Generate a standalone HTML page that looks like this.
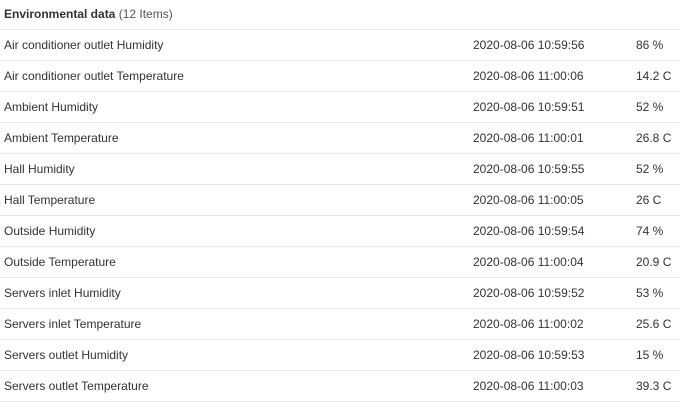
<!DOCTYPE html><html><head><style>
body{margin:0;background:#fff;font-family:"Liberation Sans",Arial,sans-serif;font-size:12px;color:#333;width:680px;height:404px;overflow:hidden}
.h{height:29px;line-height:28px;padding-left:4px;border-bottom:1px solid #e8e8e8}
.h b{font-weight:bold}.h span{color:#555}
.r{height:30px;line-height:30px;border-bottom:1px solid #e8e8e8;position:relative}
.r div{position:absolute;top:0}
.a{left:4px}.b{left:473px}.c{left:636px}
</style></head><body>
<div class="h"><b>Environmental data</b> <span>(12 Items)</span></div>
<div class="r"><div class="a">Air conditioner outlet Humidity</div><div class="b">2020-08-06 10:59:56</div><div class="c">86 %</div></div>
<div class="r"><div class="a">Air conditioner outlet Temperature</div><div class="b">2020-08-06 11:00:06</div><div class="c">14.2 C</div></div>
<div class="r"><div class="a">Ambient Humidity</div><div class="b">2020-08-06 10:59:51</div><div class="c">52 %</div></div>
<div class="r"><div class="a">Ambient Temperature</div><div class="b">2020-08-06 11:00:01</div><div class="c">26.8 C</div></div>
<div class="r"><div class="a">Hall Humidity</div><div class="b">2020-08-06 10:59:55</div><div class="c">52 %</div></div>
<div class="r"><div class="a">Hall Temperature</div><div class="b">2020-08-06 11:00:05</div><div class="c">26 C</div></div>
<div class="r"><div class="a">Outside Humidity</div><div class="b">2020-08-06 10:59:54</div><div class="c">74 %</div></div>
<div class="r"><div class="a">Outside Temperature</div><div class="b">2020-08-06 11:00:04</div><div class="c">20.9 C</div></div>
<div class="r"><div class="a">Servers inlet Humidity</div><div class="b">2020-08-06 10:59:52</div><div class="c">53 %</div></div>
<div class="r"><div class="a">Servers inlet Temperature</div><div class="b">2020-08-06 11:00:02</div><div class="c">25.6 C</div></div>
<div class="r"><div class="a">Servers outlet Humidity</div><div class="b">2020-08-06 10:59:53</div><div class="c">15 %</div></div>
<div class="r"><div class="a">Servers outlet Temperature</div><div class="b">2020-08-06 11:00:03</div><div class="c">39.3 C</div></div>
</body></html>
